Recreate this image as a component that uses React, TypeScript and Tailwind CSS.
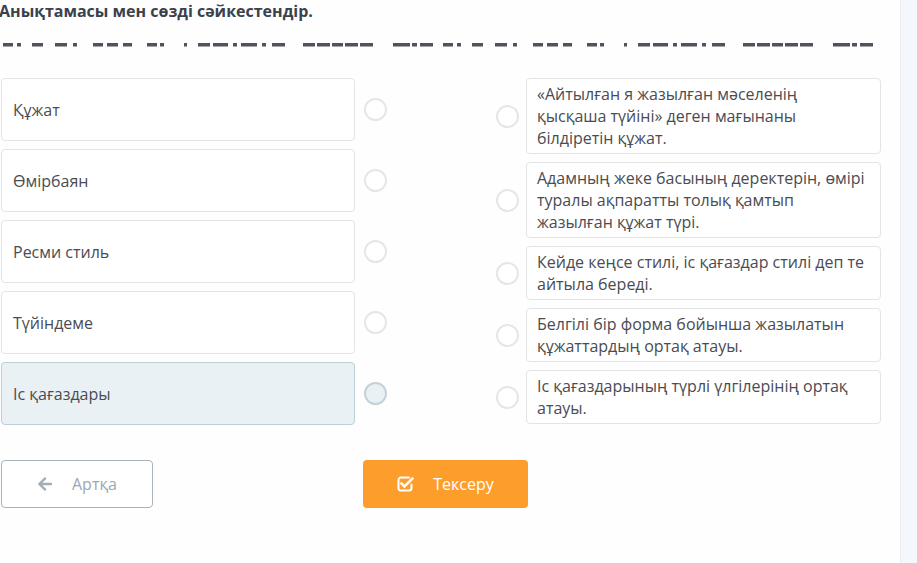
import React from "react";
import { FaArrowLeft } from "react-icons/fa";

const segs: [number, number][] = [
  [3, 10], [17, 4], [32, 11], [55, 12], [73, 4], [93, 10], [107, 11], [123, 9],
  [147, 10], [160, 4], [184, 3], [198, 12], [213, 15], [233, 4], [241, 16], [262, 4],
  [272, 13], [303, 12], [317, 13], [332, 11], [345, 13], [360, 13], [393, 17], [412, 5], [420, 13],
];

const left = ["Құжат", "Өмірбаян", "Ресми стиль", "Түйіндеме", "Іс қағаздары"];
const right = [
  "«Айтылған я жазылған мәселенің қысқаша түйіні» деген мағынаны білдіретін құжат.",
  "Адамның жеке басының деректерін, өмірі туралы ақпаратты толық қамтып жазылған құжат түрі.",
  "Кейде кеңсе стилі, іс қағаздар стилі деп те айтыла береді.",
  "Белгілі бір форма бойынша жазылатын құжаттардың ортақ атауы.",
  "Іс қағаздарының түрлі үлгілерінің ортақ атауы.",
];

function CheckSquare() {
  return (
    <svg width="17" height="16" viewBox="0 0 17 16" fill="none">
      <path
        d="M12 1.5H4A2.5 2.5 0 0 0 1.5 4v8A2.5 2.5 0 0 0 4 14.5h8a2.5 2.5 0 0 0 2.5-2.5V8.5"
        stroke="white"
        strokeWidth="2"
        strokeLinecap="round"
      />
      <path d="M4.5 7.5l3 3L15.5 2.5" stroke="white" strokeWidth="2.6" strokeLinecap="square" />
    </svg>
  );
}

export default function App() {
  return (
    <div
      className="flex w-[917px] h-[563px] bg-white overflow-hidden"
      style={{ fontFamily: '"Open Sans", "Noto Sans", sans-serif' }}
    >
      <div className="w-[900px] shrink-0 bg-[#fefefe]">
        <h1 className="text-[16px] leading-[22px] font-bold text-[#3b414d] -ml-[1px]">
          Анықтамасы мен сөзді сәйкестендір.
        </h1>
        <svg width="880" height="6" className="block mt-[20px]" viewBox="0 0 880 6">
          {[0, 440].map((off) =>
            segs.map(([x, w], i) => (
              <rect key={off + "-" + i} x={x + off} y={1} width={w} height={3.5} fill="#4f535a" />
            ))
          )}
        </svg>
        <div className="flex mt-[30px] ml-[1px]">
          <div className="flex flex-col gap-[8px] w-[386px]">
            {left.map((t, i) => {
              const sel = i === 4;
              return (
                <div key={t} className="flex items-center gap-[9px]">
                  <div
                    className={
                      "w-[354px] h-[63px] rounded-[4px] border flex items-center pl-[11px] text-[16px] text-[#4a4c52] " +
                      (sel ? "bg-[#e9f1f4] border-[#bdd0d8]" : "bg-white border-[#e4e4e4]")
                    }
                  >
                    {t}
                  </div>
                  <div
                    className={
                      "w-[23px] h-[23px] rounded-full border-2 " +
                      (sel ? "bg-[#e9f1f4] border-[#c3d2d8]" : "bg-white border-[#e6e6e6]")
                    }
                  />
                </div>
              );
            })}
          </div>
          <div className="flex flex-col gap-[8px] ml-[109px]">
            {right.map((t) => (
              <div key={t} className="flex items-center gap-[7px]">
                <div className="w-[23px] h-[23px] rounded-full border-2 border-[#e6e6e6] bg-white" />
                <div className="w-[355px] rounded-[4px] border border-[#e4e4e4] bg-white px-[10px] py-[4px] text-[16px] leading-[22px] text-[#4a4c52]">
                  {t}
                </div>
              </div>
            ))}
          </div>
        </div>
        <div className="flex mt-[35px] ml-[1px]">
          <button className="w-[152px] h-[48px] rounded-[4px] border border-[#a9b3ba] bg-white flex items-center justify-center gap-[19px] text-[16px] text-[#9ca8b0]">
            <FaArrowLeft className="w-[16px] h-[16px] text-[#a3aeb6]" />
            <span>Артқа</span>
          </button>
          <button className="ml-[210px] w-[165px] h-[48px] rounded-[4px] bg-[#fd9d2c] flex items-center justify-center gap-[19px] text-[16px] text-white">
            <CheckSquare />
            <span>Тексеру</span>
          </button>
        </div>
      </div>
      <div className="flex-1 bg-[#f4f8fc] border-l border-[#eceef1]" />
    </div>
  );
}
